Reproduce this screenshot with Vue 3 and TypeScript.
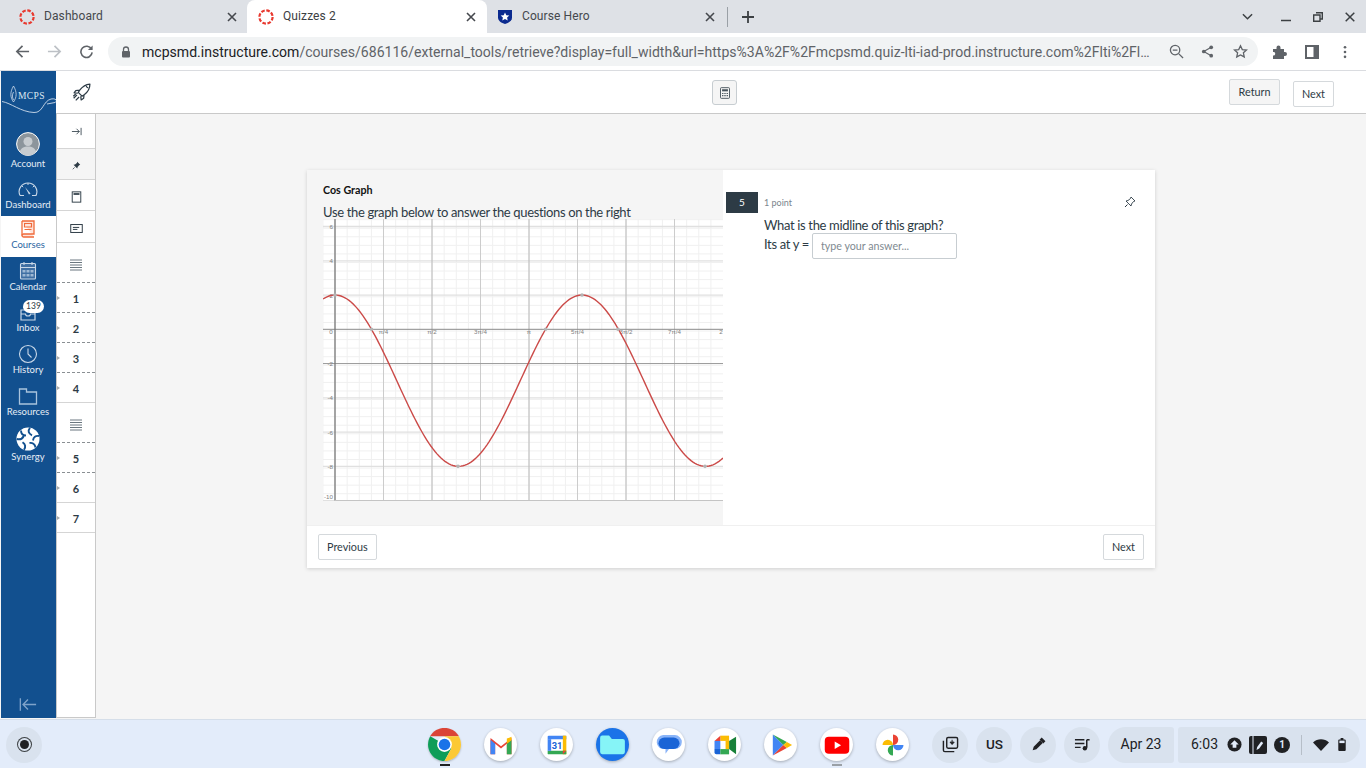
<script setup lang="ts">
const x0 = 12 // axis x inside the plot
const y0 = 110.3 // axis y inside the plot
const ux = 48.5
const uy = 17.13
const W = 400
const H = 282

const minorX: number[] = []
for (let x = x0 - ux / 4; x < W; x += ux / 4) minorX.push(x)
const minorY: number[] = []
for (let v = 6.4; v > -10.01; v -= 0.5) minorY.push(y0 - v * uy)
const majorX = [1, 2, 3, 4, 5, 6, 7].map((i) => x0 + i * ux)
const majorY = [6, 4, 2, -4, -6, -8, -10]
const yLabels = [6, 4, 2, -2, -4, -6, -8, -10]
const xLabels = ['π/4', 'π/2', '3π/4', 'π', '5π/4', '3π/2', '7π/4', '2']

const curveY = (x: number) => y0 + 3 * uy - 5 * uy * Math.cos((2 * Math.PI * (x - x0)) / 247)
let curve = ''
for (let x = 0; x <= W; x += 2) curve += `${x === 0 ? 'M' : 'L'}${x} ${curveY(x).toFixed(2)} `
const dots: [number, number][] = [
  [12, curveY(12)],
  [48.5, y0],
  [135, curveY(135.5)],
  [222.6, y0],
  [259, curveY(259)],
  [295, y0],
  [382, curveY(382.5)],
]
const labelY = (v: number) => y0 - v * uy + (v === -10 ? -1.3 : 2.5)

const tabs = [
  { title: 'Dashboard', kind: 'canvas', active: false },
  { title: 'Quizzes 2', kind: 'canvas', active: true },
  { title: 'Course Hero', kind: 'hero', active: false },
]

const rows = [
  { kind: 'arrow', h: 35 },
  { kind: 'pin', h: 31 },
  { kind: 'page', h: 31 },
  { kind: 'note', h: 32 },
  { kind: 'lines', h: 40, dash: true },
  { label: '1', h: 30, dash: true },
  { label: '2', h: 30, dash: true },
  { label: '3', h: 30, dash: true },
  { label: '4', h: 30 },
  { kind: 'lines', h: 40, dash: true },
  { label: '5', h: 30, dash: true },
  { label: '6', h: 30 },
  { label: '7', h: 30 },
]
</script>

<template>
  <div class="screen">
    <!-- browser tabs -->
    <div class="tabstrip">
      <div v-for="t in tabs" :key="t.title" class="tab" :class="{ on: t.active, hero: t.kind === 'hero' }">
        <svg v-if="t.kind === 'canvas'" class="fav" viewBox="0 0 16 16">
          <circle cx="8" cy="8" r="6.6" fill="none" stroke="#e8392f" stroke-width="2.2" stroke-dasharray="3.6 1.6" />
        </svg>
        <svg v-else class="fav" viewBox="0 0 16 16">
          <path d="M1 1h14v7.500c0 3.500-3.500 5.500-7 6.500-3.500-1-7-3-7-6.500z" fill="#0b2a8f" />
          <path d="M8 3.400l1.300 2.800 3 .3-2.200 2 .6 3-2.700-1.500-2.700 1.500.6-3-2.200-2 3-.3z" fill="#fff" />
        </svg>
        <span class="tabtitle">{{ t.title }}</span>
        <svg class="tabx" viewBox="0 0 10 10"><path d="M1 1l8 8M9 1l-8 8" stroke="#45484d" stroke-width="1.600" /></svg>
      </div>
      <span class="tabsep"></span>
      <svg class="plus" viewBox="0 0 12 12"><path d="M6 0v12M0 6h12" stroke="#3c4043" stroke-width="1.800" /></svg>
      <div class="winbtns">
        <svg class="w1" viewBox="0 0 12 8"><path d="M1 1l5 5 5-5" fill="none" stroke="#3c4043" stroke-width="1.600" /></svg>
        <svg class="w2" viewBox="0 0 10 10"><path d="M0 8.500h10" stroke="#3c4043" stroke-width="1.500" /></svg>
        <svg class="w3" viewBox="0 0 10 10"><path d="M3 .7h6.300V7H7M.7 3H7v6.300H.7z" fill="none" stroke="#3c4043" stroke-width="1.400" /></svg>
        <svg class="w4" viewBox="0 0 10 10"><path d="M.7.700l8.600 8.600M9.300.7L.7 9.300" stroke="#3c4043" stroke-width="1.500" /></svg>
      </div>
    </div>

    <!-- browser toolbar -->
    <div class="toolbar">
      <svg class="navbtn first" viewBox="0 0 16 16"><path d="M15 8H2M8 2L2 8l6 6" fill="none" stroke="#5f6368" stroke-width="1.800" /></svg>
      <svg class="navbtn" viewBox="0 0 16 16"><path d="M1 8h13M8 2l6 6-6 6" fill="none" stroke="#bdc1c6" stroke-width="1.800" /></svg>
      <svg class="navbtn" viewBox="0 0 16 16"><path d="M13.300 5.500A6 6 0 1 0 14 9" fill="none" stroke="#5f6368" stroke-width="1.700" /><path d="M14.500 1.500v5h-5z" fill="#5f6368" /></svg>
      <div class="omnibox">
        <svg class="lock" viewBox="0 0 10 12"><path d="M2.500 5V3.500a2.500 2.500 0 0 1 5 0V5" fill="none" stroke="#5f6368" stroke-width="1.300" /><rect x="1" y="5" width="8" height="6.500" rx="1" fill="#5f6368" /></svg>
        <span class="url"><b>mcpsmd.instructure.com</b>/courses/686116/external_tools/retrieve?display=full_width&amp;url=https%3A%2F%2Fmcpsmd.quiz-lti-iad-prod.instructure.com%2Flti%2Fl…</span>
        <svg class="omni zoomi" viewBox="0 0 16 16"><circle cx="6.500" cy="6.500" r="5" fill="none" stroke="#5f6368" stroke-width="1.400" /><path d="M10.500 10.500l4.500 4.500M4 6.500h5" stroke="#5f6368" stroke-width="1.400" /></svg>
        <svg class="omni share" viewBox="0 0 14 14"><path d="M11 2.500L3 7l8 4.500" fill="none" stroke="#5f6368" stroke-width="1.300" /><circle cx="11" cy="2.500" r="2" fill="#5f6368" /><circle cx="3" cy="7" r="2" fill="#5f6368" /><circle cx="11" cy="11.500" r="2" fill="#5f6368" /></svg>
        <svg class="omni star" viewBox="0 0 16 16"><path d="M8 1.800l1.900 4.100 4.500.5-3.300 3 .9 4.400L8 11.600l-4 2.200.9-4.400-3.300-3 4.500-.5z" fill="none" stroke="#5f6368" stroke-width="1.400" /></svg>
      </div>
      <svg class="tool puzzle" viewBox="0 0 16 16"><path d="M1 5h3.500V3.500a2 2 0 0 1 4 0V5H12v3h1a2 2 0 0 1 0 4h-1v3H1v-3.500h1.200a2 2 0 0 0 0-3.500H1z" fill="#5f6368" /></svg>
      <svg class="tool panel" viewBox="0 0 14 14"><path d="M0 0h14v14H0z" fill="#5f6368" /><path d="M2 2h6.500v10H2z" fill="#fff" /></svg>
      <svg class="tool dots" viewBox="0 0 4 16"><circle cx="2" cy="2.500" r="1.500" fill="#5f6368" /><circle cx="2" cy="8" r="1.500" fill="#5f6368" /><circle cx="2" cy="13.500" r="1.500" fill="#5f6368" /></svg>
    </div>

    <!-- page -->
    <div class="page">
      <nav class="gnav">
        <div class="logo">
          <svg viewBox="0 0 56 42" class="logosvg">
            <path d="M12.500 15c-3.500 6-3.500 11 0 16 3.500-5 3.500-10 0-16zM12.500 21c-1.500 3-1.500 5 0 8" fill="none" stroke="#cfdcec" stroke-width=".8" />
            <text x="17" y="28" class="logotext">MCPS</text>
            <path d="M1 30.500C10 32 20 41 33 41.500 42 42 42 30 50 28c5-1 7 2 4 3.500l-8 1.500" fill="none" stroke="#cfdcec" stroke-width=".9" />
          </svg>
        </div>
        <a class="item account">
          <svg class="ico" viewBox="0 0 24 24">
            <circle cx="12" cy="12" r="11.400" fill="#8c959c" stroke="#fff" stroke-width="1" />
            <circle cx="12" cy="9.500" r="4.500" fill="#c7ccd0" />
            <path d="M3.800 20c1-4 4-5.500 8.200-5.500s7 1.500 8.200 5.500a11 11 0 0 1-16.400 0z" fill="#c7ccd0" />
          </svg>
          <span>Account</span>
        </a>
        <a class="item dash">
          <svg class="ico" viewBox="2 0 20 20">
            <path d="M4 16.500C1 10 6 4 12 4s11 6 8 12.500h-4M4 16.500h4" fill="none" stroke="#c9d8e8" stroke-width="1.100" />
            <path d="M9 8l4 7.500 1.500-1z" fill="#c9d8e8" />
            <path d="M12 4v2M6 7l1.200 1.200M18 7l-1.200 1.200" stroke="#c9d8e8" stroke-width="1" />
          </svg>
          <span>Dashboard</span>
        </a>
        <a class="item active">
          <svg class="ico" viewBox="0 0 20 20">
            <path d="M4 2h12v13H5.500a1.500 1.500 0 0 0 0 3H16" fill="#fde4dc" stroke="#f06a3a" stroke-width="1.300" />
            <path d="M6.500 4.500h7v3.500h-7zM6.500 10.500h7" fill="none" stroke="#f06a3a" stroke-width="1.200" />
            <path d="M4 2v14.500" stroke="#f06a3a" stroke-width="1.300" />
          </svg>
          <span>Courses</span>
        </a>
        <a class="item tall">
          <svg class="ico" viewBox="0 0 20 20">
            <rect x="2.500" y="2.500" width="15" height="15.500" rx="1" fill="#3f6fa3" stroke="#c9d8e8" stroke-width="1.100" />
            <path d="M2.500 6.500h15M6 1v3M14 1v3" stroke="#c9d8e8" stroke-width="1.100" />
            <path d="M4.500 9h3v2.500h-3zM8.500 9h3v2.500h-3zM12.500 9h3v2.500h-3zM4.500 13h3v2.500h-3zM8.500 13h3v2.500h-3zM12.500 13h3v2.500h-3z" fill="#9db8d4" />
          </svg>
          <span>Calendar</span>
        </a>
        <a class="item inbox">
          <svg class="ico" viewBox="0 0 20 20">
            <path d="M3 8h14v10H3zM5 5.500h10" fill="none" stroke="#c9d8e8" stroke-width="1.200" />
            <path d="M3 12h4.500a2.500 2 0 0 0 5 0H17" fill="none" stroke="#c9d8e8" stroke-width="1.100" />
          </svg>
          <span>Inbox</span>
          <b class="badge">139</b>
        </a>
        <a class="item tall">
          <svg class="ico" viewBox="0 0 20 20">
            <circle cx="10" cy="10" r="8.500" fill="none" stroke="#c9d8e8" stroke-width="1.100" />
            <path d="M10 4.500V10l3.500 3.500" fill="none" stroke="#c9d8e8" stroke-width="1.100" />
          </svg>
          <span>History</span>
        </a>
        <a class="item tall">
          <svg class="ico" viewBox="0 0 20 20">
            <path d="M1.500 3h7v3h10v12h-17z" fill="none" stroke="#a9c3dd" stroke-width="1.300" />
          </svg>
          <span>Resources</span>
        </a>
        <a class="item synergy">
          <svg class="ico big" viewBox="0 0 24 24">
            <circle cx="12" cy="12" r="11.500" fill="#fff" />
            <path d="M14 .8c-2.500 3-1.500 6 2 7.500M23 9c-3.500-.5-5.500 1-6 4.500M19.500 20.500c-.5-3.500-3-5-6-4.500M8 22.800c2-3 1.500-5.500-1.500-7.500M.8 12c3.500 1 5.500 0 7-3M5 3.500C5 7 7 8.500 10 8.500" fill="none" stroke="#12508f" stroke-width="1.900" />
          </svg>
          <span>Synergy</span>
        </a>
        <svg class="collapse" viewBox="0 0 20 14">
          <path d="M1.500 0v14M19 7H4.500M10 1.500L4.500 7l5.500 5.500" fill="none" stroke="#7fa3ca" stroke-width="1.500" />
        </svg>
      </nav>

      <div class="content">
        <header class="qheader">
          <svg class="rocket" viewBox="0 0 24 24">
            <path d="M21.500 2.500c-5 .5-9 3-12 7l-2 3 4.500 4.500 3-2c4-3 6.500-7 6.500-12.500zM9 9.800l-4.500.5L2.500 13l4.500.5M14.500 15l-.5 4.500-3 2-.5-4.500" fill="none" stroke="#2d3b45" stroke-width="1.500" stroke-linejoin="round" />
            <path d="M17 4.500a3 3 0 0 0 2.500 2.500M6 15.500L2 19.500M8.500 18l-4 4M4.500 14.500l-3 2.500" fill="none" stroke="#2d3b45" stroke-width="1.500" />
          </svg>
          <button class="calc">
            <svg viewBox="0 0 12 14"><rect x=".6" y=".6" width="10.800" height="12.800" rx="1" fill="none" stroke="#46525b" stroke-width="1.100" /><path d="M2.500 2.500h7v2.500h-7z" fill="#46525b" /><path d="M2.500 7h1.600v1.300H2.500zM5.200 7h1.600v1.300H5.200zM7.900 7h1.600v1.300H7.900zM2.500 9.500h1.600v1.300H2.500zM5.200 9.500h1.600v1.300H5.200zM7.900 9.500h1.600v1.300H7.900z" fill="#46525b" /></svg>
          </button>
          <div class="headbtns">
            <button class="btn gray">Return</button>
            <button class="btn lower">Next</button>
          </div>
        </header>

        <div class="body">
          <aside class="qnav">
            <div v-for="(r, i) in rows" :key="i" class="qrow" :class="{ dash: r.dash, grayrow: r.kind === 'pin' }" :style="{ height: r.h + 'px' }">
              <template v-if="r.label">
                <i class="tri"></i>
                <span class="num">{{ r.label }}</span>
              </template>
              <svg v-else-if="r.kind === 'arrow'" class="qi arrow" viewBox="0 0 12 12"><path d="M1 6h8M6 3l3 3-3 3M11 2v8" fill="none" stroke="#2d3b45" stroke-width=".9" /></svg>
              <svg v-else-if="r.kind === 'pin'" class="qi" viewBox="0 0 12 12"><path d="M7 1l4 4-1.500.5L7.500 8l-.5 2-5-5 2-.5L6.500 2.500z" fill="#2d3b45" /><path d="M3.500 8.500L1 11" stroke="#2d3b45" /></svg>
              <svg v-else-if="r.kind === 'page'" class="qi big" viewBox="0 0 12 14"><rect x="1" y="1" width="10" height="12" fill="none" stroke="#2d3b45" stroke-width="1.100" /><path d="M2.500 2.500h7V4.500h-7z" fill="#2d3b45" /></svg>
              <svg v-else-if="r.kind === 'note'" class="qi wide" viewBox="0 0 14 10"><rect x=".6" y=".6" width="12.800" height="8.800" fill="none" stroke="#2d3b45" stroke-width="1.100" /><path d="M3 3.800h7M3 6h5" stroke="#2d3b45" stroke-width="1.100" /></svg>
              <svg v-else class="qi big lines" viewBox="0 0 12 12"><path d="M0 1h12M0 3.500h12M0 6h12M0 8.500h12M0 11h12" stroke="#6b7780" stroke-width="1" /></svg>
            </div>
          </aside>

          <main class="stage">
            <section class="card">
              <div class="cardbody">
                <div class="passage">
                  <h3>Cos Graph</h3>
                  <p>Use the graph below to answer the questions on the right</p>
                  <svg class="graph" :viewBox="`0 0 ${W} ${H}`" :width="W" :height="H">
                    <rect width="400" height="282" fill="#fff" />
                    <line v-for="x in minorX" :key="'mx' + x" :x1="x" :x2="x" y1="0" y2="281.500" stroke="#f0f0f0" />
                    <line v-for="y in minorY" :key="'my' + y" :y1="y" :y2="y" x1="0" x2="400" stroke="#f0f0f0" />
                    <line v-for="v in majorY" :key="'hy' + v" :y1="y0 - v * uy" :y2="y0 - v * uy" x1="0" x2="400" stroke="#e0e0e0" stroke-width="1.300" />
                    <line v-for="(x, i) in majorX" :key="'hx' + x" :x1="x" :x2="x" y1="0" y2="281.500" :stroke="i % 2 === 1 ? '#b8b8b8' : '#cccccc'" />
                    <line :y1="y0 + 2 * uy" :y2="y0 + 2 * uy" x1="0" x2="400" stroke="#9a9a9a" />
                    <line :y1="y0" :y2="y0" x1="0" x2="400" stroke="#8a8a8a" />
                    <line x1="12" x2="12" y1="0" y2="281.500" stroke="#777" stroke-width="1.300" />
                    <line x1="12" x2="400" y1="281.500" y2="281.500" stroke="#c4c4c4" />
                    <text v-for="v in yLabels" :key="'ly' + v" x="10" :y="labelY(v)" class="tick" text-anchor="end">{{ v }}</text>
                    <text x="8" :y="y0 + 5" class="tick" text-anchor="middle">0</text>
                    <text v-for="(l, i) in xLabels" :key="l" :x="Math.min(x0 + (i + 1) * ux, 398)" :y="y0 + 5" class="tick" text-anchor="middle">{{ l }}</text>
                    <path :d="curve" fill="none" stroke="#cb4a48" stroke-width="1.400" />
                    <circle v-for="(d, i) in dots" :key="i" :cx="d[0]" :cy="d[1]" r="1.800" fill="#b4b4b4" />
                  </svg>
                </div>
                <div class="question">
                  <div class="qhead">
                    <span class="qnum">5</span>
                    <span class="pts">1 point</span>
                    <svg class="qpin" viewBox="0 0 12 12"><path d="M7 1l4 4-1.500.5L7.500 8l-.5 2-5-5 2-.5L6.500 2.500z" fill="none" stroke="#2d3b45" stroke-width=".9" /><path d="M3.500 8.500L1 11" stroke="#2d3b45" /></svg>
                  </div>
                  <div class="qtext">
                    <p>What is the midline of this graph?</p>
                    <div class="answer">
                      <span>Its at y =</span>
                      <input type="text" placeholder="type your answer..." />
                    </div>
                  </div>
                </div>
              </div>
              <footer class="cardfoot">
                <button class="btn">Previous</button>
                <button class="btn">Next</button>
              </footer>
            </section>
          </main>
        </div>
      </div>
    </div>

    <!-- chromeos shelf -->
    <div class="shelf">
      <div class="launcher"><i></i></div>
      <div class="apps">
        <div class="app chrome">
          <svg viewBox="-17 -17 34 34" class="plain">
            <path d="M-14.700-8.500A17 17 0 0 1 14.700-8.500H0z" fill="#db4437" transform="scale(1.010)" />
            <path d="M-14.700-8.500A17 17 0 0 0 0 17L7 4 0 0z" fill="#0f9d58" />
            <path d="M14.700-8.500A17 17 0 0 1 0 17L7 4 0-8.500z" fill="#fcc934" />
            <circle r="7.600" fill="#fff" />
            <circle r="6" fill="#1a73e8" />
          </svg>
          <i class="dot dark"></i>
        </div>
        <div class="app">
          <svg viewBox="0 0 24 24"><path d="M3 20V6l9 7 9-7v14h-4V11l-5 4-5-4v9z" fill="#ea4335" /><path d="M3 20h4v-9L3 7.500z" fill="#4285f4" /><path d="M17 20h4V7.500L17 11z" fill="#34a853" /><path d="M17 6.500l4-1.500v3l-4 3z" fill="#fbbc04" /></svg>
        </div>
        <div class="app">
          <svg viewBox="0 0 24 24"><path d="M4 4h16v16H4z" fill="#fff" /><path d="M4 7V5a1 1 0 0 1 1-1h14a1 1 0 0 1 1 1v2z" fill="#4285f4" /><path d="M17 4h3v16h-3z" fill="#fbbc04" /><path d="M4 17h16v2a1 1 0 0 1-1 1H5a1 1 0 0 1-1-1z" fill="#34a853" /><path d="M4 7h3v10H4z" fill="#4285f4" /><path d="M17 17h3l-3 3z" fill="#ea4335" /><text x="12" y="15.500" class="cal">31</text></svg>
        </div>
        <div class="app files">
          <svg viewBox="0 0 24 24" class="plain"><path d="M3 7a1.500 1.500 0 0 1 1.500-1.500h5L11.500 8h8A1.500 1.500 0 0 1 21 9.500v8a1.500 1.500 0 0 1-1.500 1.500h-15A1.500 1.500 0 0 1 3 17.500z" fill="#86f4f7" /></svg>
        </div>
        <div class="app">
          <svg viewBox="0 0 24 24"><path d="M7 3.500h10a6 6 0 0 1 0 12h-5l-3 4v-4H8a6 6 0 0 1-1-12z" fill="#8ab4f8" /><rect x="3" y="5.500" width="18" height="10" rx="5" fill="#1a64d6" /></svg>
        </div>
        <div class="app">
          <svg viewBox="0 0 24 24"><path d="M8 4h7.500v4.500H8z" fill="#fbbc04" /><path d="M3 8.500L8 4v4.500z" fill="#ea4335" /><path d="M3 8.500h5v7H3z" fill="#4285f4" /><path d="M3 15.500h5V20H4.500A1.500 1.500 0 0 1 3 18.500z" fill="#1a64d6" /><path d="M8 15.500h7.500V20H8z" fill="#34a853" /><path d="M15.500 8.500v7l6 4.500V5z" fill="#188038" /><path d="M15.500 8.500V15.500h-3V8.500z" fill="#fbbc04" /></svg>
        </div>
        <div class="app">
          <svg viewBox="0 0 24 24"><path d="M5 3l9 9-9 9z" fill="#4285f4" /><path d="M5 3l12 6.500L14 12z" fill="#34a853" /><path d="M5 21l12-6.500L14 12z" fill="#ea4335" /><path d="M17 9.500l4.500 2.500-4.500 2.500L14 12z" fill="#fbbc04" /></svg>
        </div>
        <div class="app">
          <svg viewBox="0 0 24 24"><rect x="1.500" y="5" width="21" height="14.500" rx="3.500" fill="#f00" /><path d="M10 9v6.500l5.500-3.250z" fill="#fff" /></svg>
          <i class="dot"></i>
        </div>
        <div class="app">
          <svg viewBox="0 0 24 24"><path d="M12 12V3a4.500 4.500 0 0 1 0 9z" fill="#ea4335" /><path d="M12 12h9a4.500 4.500 0 0 1-9 0z" fill="#4285f4" /><path d="M12 12v9a4.500 4.500 0 0 1 0-9z" fill="#34a853" /><path d="M12 12H3a4.500 4.500 0 0 1 9 0z" fill="#fbbc04" /></svg>
        </div>
      </div>
      <div class="tray">
        <div class="pod">
          <svg viewBox="0 0 18 18"><rect x="5" y="1.500" width="11.500" height="11.500" rx="1.500" fill="none" stroke="#202124" stroke-width="1.500" /><path d="M1.500 5v10a1.500 1.500 0 0 0 1.500 1.500h10" fill="none" stroke="#202124" stroke-width="1.500" /><path d="M10.700 4v4M8.500 6.500l2.200 2.500 2.200-2.500z" fill="#202124" stroke="#202124" /></svg>
        </div>
        <div class="pod text">US</div>
        <div class="pod">
          <svg viewBox="0 0 16 16"><path d="M2.500 13.500l1-3.500 6-6 2.500 2.500-6 6z" fill="#202124" /><path d="M9 3.500l2-2 3.500 3.500-2 2z" fill="#202124" /></svg>
        </div>
        <div class="pod">
          <svg viewBox="0 0 18 16"><path d="M1 3h10M1 7h10M1 11h6" stroke="#202124" stroke-width="1.500" /><path d="M13.500 3v8.500" stroke="#202124" stroke-width="1.600" /><circle cx="11.500" cy="12" r="2.300" fill="#202124" /><path d="M13.500 3h3" stroke="#202124" stroke-width="1.600" /></svg>
        </div>
        <div class="datepill">Apr 23</div>
        <div class="statuspill">
          <span class="time">6:03</span>
          <svg class="s up" viewBox="0 0 16 16"><circle cx="8" cy="8" r="7.500" fill="#202124" /><path d="M8 3.500l4.500 4.500H10v3.500H6V8H3.500z" fill="#e3ecfa" /></svg>
          <svg class="s pen" viewBox="0 0 18 18"><rect width="18" height="18" rx="2" fill="#202124" /><path d="M4 0v18" stroke="#e3ecfa" stroke-width="1" /><path d="M7.500 14l.7-3 4-5.500 2 1.500-4 5.500z" fill="#e3ecfa" /></svg>
          <span class="one">1</span>
          <i class="bar"></i>
          <svg class="s wifi" viewBox="0 0 16 12"><path d="M0 3.500C4.500-.8 11.500-.8 16 3.500L8 12z" fill="#202124" /></svg>
          <svg class="s batt" viewBox="0 0 8 14"><path d="M2.500 0h3v1.500H7a1 1 0 0 1 1 1V13a1 1 0 0 1-1 1H1a1 1 0 0 1-1-1V2.500a1 1 0 0 1 1-1h1.500z" fill="#202124" /><path d="M1.200 2.800h5.600v2.700H1.200z" fill="#e3ecfa" /></svg>
        </div>
      </div>
    </div>
  </div>
</template>

<style scoped>
.screen { width: 1366px; height: 768px; overflow: hidden; display: flex; flex-direction: column; font-family: "Lato", sans-serif; background: #fff; color: #2d3b45; }

/* tabs */
.tabstrip { height: 33px; background: #dee1e6; display: flex; align-items: stretch; font-family: "Roboto", sans-serif; flex: none; }
.tab { width: 240px; display: flex; align-items: center; padding-left: 19px; padding-right: 10px; box-sizing: border-box; font-size: 12px; color: #45484d; }
.tab:first-child { width: 247px; }
.tab.on { background: #fff; border-radius: 8px 8px 0 0; color: #3c4043; padding-left: 11px; padding-right: 11px; }
.tab.hero { padding-left: 10px; padding-right: 12px; }
.fav { width: 16px; height: 16px; flex: none; }
.tabtitle { margin: 0 0 1px 9px; flex: 1; letter-spacing: .1px; }
.tabx { width: 10px; height: 10px; }
.tabsep { width: 1px; height: 20px; background: #9aa0a6; align-self: center; }
.plus { width: 12px; height: 12px; align-self: center; margin-left: 14px; }
.winbtns { margin-left: auto; display: flex; align-items: center; padding-right: 11px; }
.w1 { width: 11px; height: 8px; margin-right: 28px; }
.w2 { width: 10px; height: 10px; margin-right: 22px; }
.w3 { width: 10px; height: 10px; margin-right: 22px; }
.w4 { width: 10px; height: 10px; }

/* toolbar */
.toolbar { height: 37px; border-bottom: 1px solid #dadce0; background: #fff; display: flex; align-items: center; flex: none; box-sizing: content-box; font-family: "Roboto", sans-serif; }
.navbtn { width: 15px; height: 15px; margin-left: 17px; }
.navbtn.first { margin-left: 15px; }
.omnibox { width: 1150px; height: 29px; margin-left: 14px; border-radius: 15px; background: #f1f3f4; display: flex; align-items: center; box-sizing: border-box; padding-left: 13px; position: relative; }
.lock { width: 10px; height: 12px; flex: none; }
.url { margin-left: 11px; width: 1019px; flex: none; font-size: 14.050px; color: #5f6368; white-space: nowrap; overflow: hidden; }
.url b { font-weight: 400; color: #202124; }
.omni { flex: none; }
.zoomi { width: 15px; height: 15px; margin-left: 8px; }
.share { width: 13px; height: 13px; margin-left: 17px; }
.star { width: 15px; height: 15px; margin-left: 19px; }
.tool { flex: none; }
.puzzle { width: 16px; height: 16px; margin-left: 14px; }
.panel { width: 14px; height: 14px; margin-left: 17px; }
.dots { width: 4px; height: 14px; margin-left: 24px; }

/* page */
.page { height: 648px; display: flex; background: #f5f5f5; flex: none; }
.gnav { width: 55px; margin-left: 1px; background: #12508f; display: flex; flex-direction: column; flex: none; color: #fff; height: 647px; }
.logo { height: 42px; flex: none; }
.logosvg { width: 56px; height: 42px; display: block; }
.logotext { font-family: "Liberation Serif", serif; font-size: 9.500px; fill: #dfe8f2; letter-spacing: .4px; }
.item { position: relative; height: 41px; flex: none; display: flex; flex-direction: column; align-items: center; justify-content: flex-end; padding: 0 1px 6px 0; box-sizing: border-box; font-size: 9.500px; line-height: 12px; color: #e6edf5; }
.item.account { height: 63px; }
.item.dash { height: 40px; padding-bottom: 5px; }
.item.active { background: #fff; color: #2a659f; }
.item.tall { height: 42px; }
.item.inbox { height: 41px; }
.item.synergy { height: 45px; }
.ico { width: 20px; height: 20px; display: block; }
.account .ico { width: 24px; height: 24px; margin-bottom: 2px; }
.ico.big { width: 24px; height: 24px; }
.badge { position: absolute; left: 22px; top: 1px; height: 13px; width: 21px; border-radius: 7px; background: #fff; color: #2d3b45; font-size: 8.500px; font-weight: 400; line-height: 13px; text-align: center; }
.collapse { width: 18px; height: 13px; margin: auto 0 7px 18px; flex: none; }

.content { flex: 1; display: flex; flex-direction: column; min-width: 0; }
.qheader { height: 43px; background: #fff; border-bottom: 1px solid #c9c9c9; box-sizing: border-box; display: grid; grid-template-columns: 656px 25px 1fr; align-items: center; flex: none; position: relative; }
.rocket { width: 20px; height: 20px; margin-left: 16px; }
.calc { width: 25px; height: 25px; padding: 0; border: 1px solid #c7cdd1; border-radius: 3px; background: #f5f5f5; display: flex; align-items: center; justify-content: center; margin-top: 1px; }
.calc svg { width: 10px; height: 12px; }
.headbtns { display: flex; justify-content: flex-end; align-items: flex-start; align-self: start; gap: 13px; padding: 8px 32px 0 0; }
.btn { font-family: "Lato", sans-serif; font-size: 10.800px; height: 26px; padding: 0 8px 2px; border: 1px solid #d5d9dc; border-radius: 2px; background: #fff; color: #2d3b45; box-sizing: border-box; }
.btn.gray { background: #f5f5f5; margin-right: 0; padding: 0 8.500px 2px; }
.btn.lower { margin-top: 2px; }

.body { flex: 1; display: flex; min-height: 0; }
.qnav { width: 40px; flex: none; height: 604px; box-sizing: border-box; background: #fff; border-left: 1px solid #c9c9c9; border-right: 1px solid #c9c9c9; border-bottom: 1px solid #c9c9c9; }
.qrow { box-sizing: border-box; display: flex; align-items: center; justify-content: center; position: relative; border-bottom: 1px solid #d5d5d5; font-size: 11px; font-weight: 700; color: #2d3b45; }
.qrow.dash { border-bottom: 1px dashed #8a8f93; }
.grayrow { background: #f5f5f5; }
.num { margin-top: 2px; }
.tri { position: absolute; left: 0; top: 50%; margin-top: -2px; border-left: 3px solid #a5a9ad; border-top: 2.500px solid transparent; border-bottom: 2.500px solid transparent; }
.qi { width: 9px; height: 9px; margin-top: 3px; }
.qi.arrow { width: 11px; height: 11px; margin-top: 1px; }
.qi.big { width: 11px; height: 12px; }
.qi.wide { width: 13px; height: 9px; margin-top: 3px; }
.qi.lines { width: 12px; height: 12px; margin-top: 4px; }

.stage { flex: 1; padding: 56px 0 0 211px; }
.card { width: 848px; height: 398px; background: #fff; box-shadow: 0 1px 4px rgba(0, 0, 0, .16); display: flex; flex-direction: column; }
.cardbody { height: 355px; display: flex; flex: none; }
.passage { width: 416px; flex: none; background: #f5f5f5; padding: 13px 0 0 16px; box-sizing: border-box; }
.passage h3 { margin: 0; font-size: 10.700px; line-height: 13px; font-weight: 700; color: #111; }
.passage p { margin: 9px 0 0; font-size: 13px; letter-spacing: -.35px; line-height: 14px; color: #2d3b45; white-space: nowrap; }
.graph { display: block; }
.tick { font-family: "Liberation Sans", sans-serif; font-size: 6.200px; fill: #808080; }
.question { flex: 1; position: relative; }
.qhead { display: flex; align-items: center; margin: 22px 0 0 3px; height: 21px; padding-right: 19px; }
.qnum { width: 32px; height: 21px; background: #2d3b45; color: #fff; font-size: 10px; line-height: 21px; text-align: center; flex: none; }
.pts { margin-left: 6px; font-size: 9px; color: #7b858d; flex: 1; }
.qpin { width: 12px; height: 12px; margin-bottom: 2px; }
.qtext { margin: 4px 0 0 41px; font-size: 13px; letter-spacing: -.34px; color: #2d3b45; }
.qtext p { margin: 0; line-height: 17px; }
.answer { display: flex; align-items: flex-start; }
.answer span { line-height: 17px; margin-top: 2px; margin-right: 3px; }
.answer input { width: 145px; height: 26px; box-sizing: border-box; border: 1px solid #c7cdd1; border-radius: 2px; padding: 0 8px 2px; font-family: "Lato", sans-serif; font-size: 10.700px; outline: none; margin-top: -1px; }
.answer input::placeholder { color: #808a91; }
.cardfoot { flex: 1; border-top: 1px solid #f0f0f0; display: flex; justify-content: space-between; align-items: flex-start; padding: 8px 11px 0; }

/* shelf */
.shelf { height: 50px; flex: none; background: #e3ecfa; border-top: 1px solid #d5dee9; box-sizing: border-box; position: relative; display: flex; align-items: center; font-family: "Roboto", sans-serif; }
.launcher { width: 36px; height: 36px; border-radius: 50%; background: #d9e2ee; margin-left: 6px; display: flex; align-items: center; justify-content: center; flex: none; }
.launcher i { width: 9px; height: 9px; background: #202124; border-radius: 50%; box-shadow: 0 0 0 2px #d9e2ee, 0 0 0 3px #3c4043; display: block; }
.apps { display: flex; align-items: center; margin-left: 386px; gap: 23px; }
.app { position: relative; width: 33px; height: 33px; border-radius: 50%; background: #fff; box-shadow: 0 1px 3px rgba(0, 0, 0, .28); display: flex; align-items: center; justify-content: center; flex: none; }
.app svg { width: 28px; height: 28px; display: block; }
.app svg.plain { width: 33px; height: 33px; }
.app.chrome { background: transparent; box-shadow: 0 1px 2px rgba(0, 0, 0, .25); }
.app.files { background: #1a73e8; }
.cal { font-family: "Roboto", sans-serif; font-size: 8px; font-weight: 700; fill: #1a64d6; text-anchor: middle; }
.dot { position: absolute; left: 50%; bottom: -5px; margin-left: -5px; width: 10px; height: 2px; background: #9aa0a6; }
.dot.dark { background: #202124; }
.tray { display: flex; align-items: center; margin-left: 23px; }
.pod { width: 36px; height: 36px; border-radius: 50%; background: #d9e2ee; margin-right: 8px; display: flex; align-items: center; justify-content: center; flex: none; }
.pod svg { width: 17px; height: 17px; margin-bottom: 1px; }
.pod.text { font-size: 13.500px; font-weight: 500; color: #202124; padding: 0 0 2px 1px; box-sizing: border-box; }
.datepill { width: 66px; height: 36px; background: #d9e2ee; border-radius: 18px 3px 3px 18px; display: flex; align-items: center; justify-content: center; font-size: 14px; color: #202124; box-sizing: border-box; padding-bottom: 2px; }
.statuspill { width: 182px; height: 36px; margin-left: 4px; background: #d9e2ee; border-radius: 3px 18px 18px 3px; display: flex; align-items: center; font-size: 14px; color: #202124; box-sizing: border-box; padding-left: 13px; }
.s { flex: none; }
.time { width: 36px; margin-bottom: 2px; }
.up { width: 15px; height: 15px; }
.pen { width: 18px; height: 18px; margin-left: 7px; }
.one { width: 16px; height: 16px; border-radius: 50%; background: #202124; color: #e3ecfa; font-size: 10px; font-weight: 700; line-height: 16px; text-align: center; margin-left: 7px; }
.bar { width: 1px; height: 20px; background: #b6bec8; margin-left: 11px; }
.wifi { width: 16px; height: 12px; margin-left: 11px; }
.batt { width: 8px; height: 13px; margin-left: 9px; }
</style>

<style>
html, body { margin: 0; overflow: hidden; }
button { cursor: default; }
</style>
